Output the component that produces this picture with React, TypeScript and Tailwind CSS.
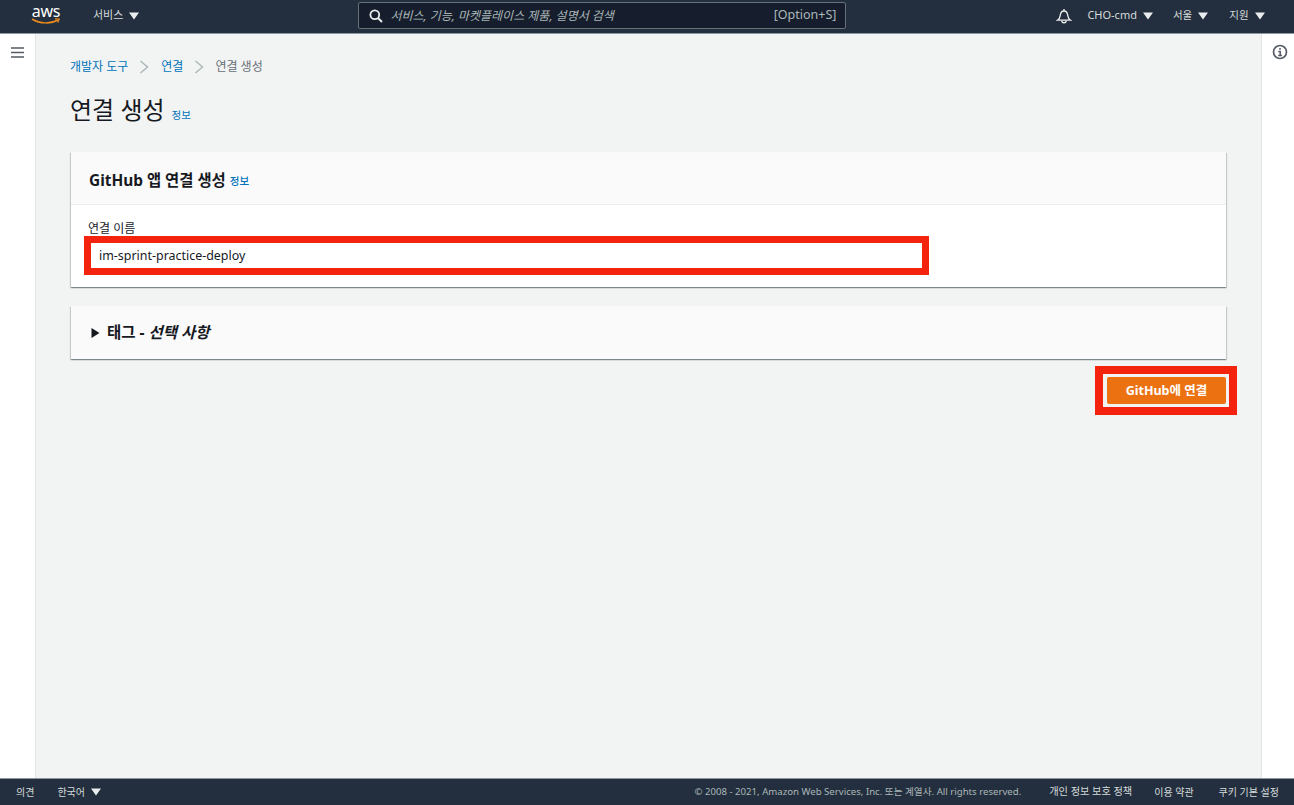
import React from "react";

function Caret({ className = "" }: { className?: string }) {
  return (
    <svg width="10" height="8" viewBox="0 0 10 8" className={className}>
      <path d="M0 0.5h10L5 7.5z" fill="#eaeded" />
    </svg>
  );
}

function Chevron({ className = "" }: { className?: string }) {
  return (
    <svg width="10" height="14" viewBox="0 0 10 14" fill="none" className={className}>
      <path d="M1.5 1l7 6-7 6" stroke="#aab7b8" strokeWidth="1.4" />
    </svg>
  );
}

function TopBar() {
  return (
    <header className="h-[34px] shrink-0 bg-[#232f3e] border-b border-[#8d979f] flex items-center pb-[2px] text-[#d5dbdb] text-[11px]">
      <div className="relative w-[32px] ml-[30px] h-[33px] mt-[2px] flex flex-col items-center">
        <span className="text-[16px] leading-[16px] mt-[3px] text-white tracking-[-0.2px]">aws</span>
        <svg width="30" height="7" viewBox="0 0 30 7" fill="none" className="-mt-[1px]">
          <path d="M1 1c8 5 19 5 26 1" stroke="#ec8a1c" strokeWidth="1.5" />
          <path d="M24 0.8l4.2 0.2-1.4 3.6" stroke="#ec8a1c" strokeWidth="1.2" />
        </svg>
      </div>
      <span className="ml-[31px]">서비스</span>
      <Caret className="ml-[6px]" />
      <div className="ml-[219px] w-[488px] h-[27px] bg-[#161e2d] border border-[#687078] rounded-[2px] flex items-center pl-[10px] pr-[9px]">
        <svg width="14" height="14" viewBox="0 0 14 14" fill="none">
          <circle cx="5.8" cy="5.8" r="4.4" stroke="#eaeded" strokeWidth="1.8" />
          <path d="M9 9l4 4" stroke="#eaeded" strokeWidth="2" />
        </svg>
        <span className="ml-[7px] text-[12px] italic text-[#aab7b8]">서비스, 기능, 마켓플레이스 제품, 설명서 검색</span>
        <span className="ml-auto text-[12.5px] text-[#aab7b8]">[Option+S]</span>
      </div>
      <svg width="16" height="16" viewBox="0 0 16 16" fill="none" className="ml-[210px]">
        <path d="M1.5 12.2c1.6-1 2.4-2.2 2.7-4.6.3-2.6 1.5-4.6 3.8-4.6s3.5 2 3.8 4.6c.3 2.4 1.1 3.6 2.7 4.6z" stroke="#eaeded" strokeWidth="1.3" />
        <path d="M5.8 12.5c0 3 4.4 3 4.4 0M8 1v2" stroke="#eaeded" strokeWidth="1.3" />
      </svg>
      <span className="ml-[15px]">CHO-cmd</span>
      <Caret className="ml-[6px]" />
      <span className="ml-[20px] text-[10.5px]">서울</span>
      <Caret className="ml-[6px]" />
      <span className="ml-[21px] text-[10.5px]">지원</span>
      <Caret className="ml-[6px]" />
    </header>
  );
}

function Footer() {
  return (
    <footer className="h-[27px] shrink-0 bg-[#232f3e] border-t border-[#8d979f] flex items-center text-[10px] text-[#d5dbdb] pl-[16px] pr-[15px]">
      <span>의견</span>
      <span className="ml-[23px]">한국어</span>
      <Caret className="ml-[6px]" />
      <span className="ml-auto text-[9.65px] text-[#aab7b8]">© 2008 - 2021, Amazon Web Services, Inc. 또는 계열사. All rights reserved.</span>
      <span className="ml-[28px] text-[10.2px]">개인 정보 보호 정책</span>
      <span className="ml-[22px]">이용 약관</span>
      <span className="ml-[25px]">쿠키 기본 설정</span>
    </footer>
  );
}

export default function App() {
  return (
    <div className="h-[805px] w-[1294px] overflow-hidden flex flex-col bg-white font-['Noto_Sans','Noto_Sans_CJK_KR',sans-serif]">
      <TopBar />
      <div className="flex-1 flex min-h-0">
        <aside className="w-[36px] shrink-0 bg-white border-r border-[#e3e5e5] flex justify-center pt-[13px] pr-[1px]">
          <svg width="13" height="11" viewBox="0 0 13 11" className="shrink-0">
            <path d="M0 1h13M0 5.5h13M0 10h13" stroke="#545b64" strokeWidth="1.6" />
          </svg>
        </aside>

        <main className="flex-1 bg-[#f2f3f3] px-[35px] pt-[24px]">
          <nav className="flex items-center h-[18px] -ml-[1px] text-[12px] text-[#0073bb]">
            <span>개발자 도구</span>
            <Chevron className="ml-[11px] mr-[12px]" />
            <span>연결</span>
            <Chevron className="mx-[11px]" />
            <span className="text-[#687078]">연결 생성</span>
          </nav>

          <div className="flex items-end mt-[17px] h-[34px] -ml-[1px]">
            <h1 className="text-[24px] leading-[34px] text-[#16191f]">연결 생성</h1>
            <span className="ml-[7px] mb-[3px] text-[10.5px] text-[#0073bb]">정보</span>
          </div>

          <section className="relative mt-[25px] bg-white shadow-[0_1px_1px_0_rgba(0,28,36,0.3),1px_1px_1px_0_rgba(0,28,36,0.15),-1px_1px_1px_0_rgba(0,28,36,0.15)]">
            <div className="h-[53px] bg-[#fafafa] border-b border-[#eaeded] flex items-center pl-[18px] pt-[5px]">
              <h2 className="text-[15.4px] font-bold text-[#16191f]">GitHub 앱 연결 생성</h2>
              <span className="ml-[4px] mt-[2px] text-[10.5px] font-medium text-[#0073bb]">정보</span>
            </div>
            <div className="h-[82px] pl-[17px] pt-[15px]">
              <label className="block text-[12px] leading-[18px] text-[#16191f]">연결 이름</label>
              <div className="mt-[7px] ml-[11px] text-[12.45px] leading-[22px] text-[#16191f]">im-sprint-practice-deploy</div>
            </div>
            <div className="absolute left-[13px] top-[84px] w-[845px] h-[39px] border-[7px] border-[#f4230d]" />
          </section>

          <section className="mt-[19px] h-[53px] bg-[#fafafa] shadow-[0_1px_1px_0_rgba(0,28,36,0.3),1px_1px_1px_0_rgba(0,28,36,0.15),-1px_1px_1px_0_rgba(0,28,36,0.15)] flex items-center pl-[20px] text-[15.5px] font-bold text-[#16191f]">
            <svg width="9" height="10" viewBox="0 0 9 10" className="mr-[7px]">
              <path d="M0.5 0l8 5-8 5z" fill="#16191f" />
            </svg>
            <span>태그 -&nbsp;</span>
            <em>선택 사항</em>
          </section>

          <div className="relative flex justify-end mt-[18px]">
            <button type="button" className="w-[119px] h-[27px] pt-[1px] bg-[#ec7211] rounded-[2px] text-white text-[12.5px] font-bold">
              GitHub에 연결
            </button>
            <div className="absolute -right-[11px] -top-[11px] w-[142px] h-[49px] border-[8px] border-[#f4230d]" />
          </div>
        </main>

        <aside className="w-[33px] shrink-0 bg-white border-l border-[#e3e5e5] flex justify-center pt-[10px] pl-[3px]">
          <svg width="16" height="16" viewBox="0 0 16 16" fill="none" className="shrink-0">
            <circle cx="8" cy="8" r="6.5" stroke="#545b64" strokeWidth="1.7" />
            <path d="M8 4v1.8M6.3 7.4H8.2V11.4M6.2 11.6h3.8" stroke="#545b64" strokeWidth="1.5" />
          </svg>
        </aside>
      </div>
      <Footer />
    </div>
  );
}
